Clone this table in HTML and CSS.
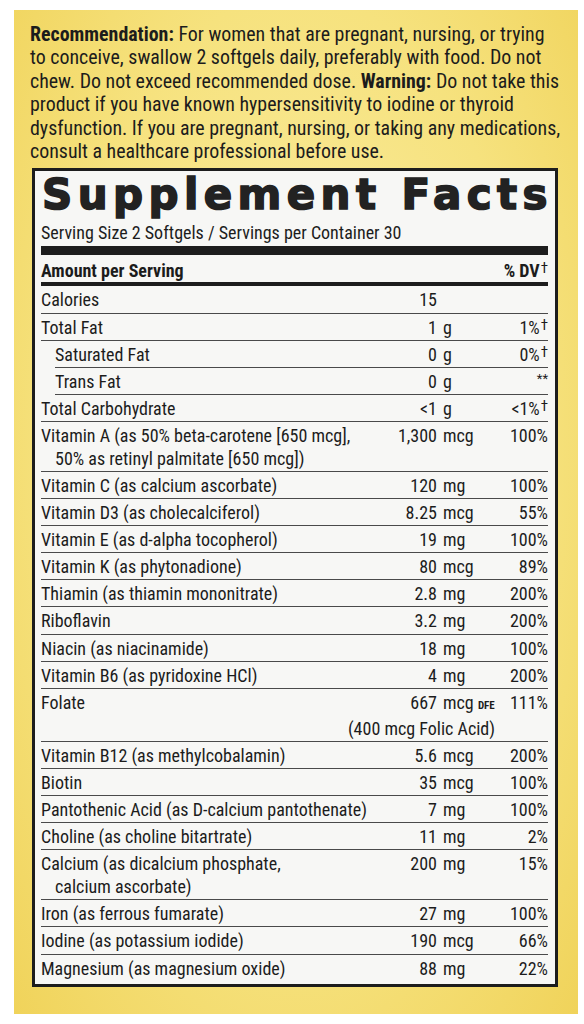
FILE: index.html
```html
<!DOCTYPE html>
<html lang="en">
<head>
    <meta charset="UTF-8">
    <meta name="viewport" content="width=device-width, initial-scale=1.0">
    <title>Supplement Facts</title>
    <link rel="stylesheet" href="styles.css">
</head>
<body>
    <div class="panel">
        <p class="directions"><b>Recommendation:</b> For women that are pregnant, nursing, or trying<br>to conceive, swallow 2 softgels daily, preferably with food. Do not<br>chew. Do not exceed recommended dose. <b>Warning:</b> Do not take this<br>product if you have known hypersensitivity to iodine or thyroid<br>dysfunction. If you are pregnant, nursing, or taking any medications,<br>consult a healthcare professional before use.</p>

        <div class="facts">
            <h1 class="facts-title">Supplement Facts</h1>
            <div class="serving">Serving Size 2 Softgels / Servings per Container 30</div>
            <div class="head-row">
                <span>Amount per Serving</span>
                <span>% DV<sup class="dag">†</sup></span>
            </div>

            <div class="rows">
                <div class="row"><span class="name">Calories</span><span class="num">15</span><span class="unit"></span><span class="dv"></span></div>
                <div class="row"><span class="name">Total Fat</span><span class="num">1</span><span class="unit">g</span><span class="dv">1%<sup class="dag">†</sup></span></div>
                <div class="row sub"><span class="name">Saturated Fat</span><span class="num">0</span><span class="unit">g</span><span class="dv">0%<sup class="dag">†</sup></span></div>
                <div class="row sub"><span class="name">Trans Fat</span><span class="num">0</span><span class="unit">g</span><span class="dv"><sup class="stars">**</sup></span></div>
                <div class="row"><span class="name">Total Carbohydrate</span><span class="num">&lt;1</span><span class="unit">g</span><span class="dv">&lt;1%<sup class="dag">†</sup></span></div>
                <div class="row"><span class="name">Vitamin A (as 50% beta-carotene [650 mcg],<br>50% as retinyl palmitate [650 mcg])</span><span class="num">1,300</span><span class="unit">mcg</span><span class="dv">100%</span></div>
                <div class="row"><span class="name">Vitamin C (as calcium ascorbate)</span><span class="num">120</span><span class="unit">mg</span><span class="dv">100%</span></div>
                <div class="row"><span class="name">Vitamin D3 (as cholecalciferol)</span><span class="num">8.25</span><span class="unit">mcg</span><span class="dv">55%</span></div>
                <div class="row"><span class="name">Vitamin E (as d-alpha tocopherol)</span><span class="num">19</span><span class="unit">mg</span><span class="dv">100%</span></div>
                <div class="row"><span class="name">Vitamin K (as phytonadione)</span><span class="num">80</span><span class="unit">mcg</span><span class="dv">89%</span></div>
                <div class="row"><span class="name">Thiamin (as thiamin mononitrate)</span><span class="num">2.8</span><span class="unit">mg</span><span class="dv">200%</span></div>
                <div class="row"><span class="name">Riboflavin</span><span class="num">3.2</span><span class="unit">mg</span><span class="dv">200%</span></div>
                <div class="row"><span class="name">Niacin (as niacinamide)</span><span class="num">18</span><span class="unit">mg</span><span class="dv">100%</span></div>
                <div class="row"><span class="name">Vitamin B6 (as pyridoxine HCl)</span><span class="num">4</span><span class="unit">mg</span><span class="dv">200%</span></div>
                <div class="row"><span class="name">Folate</span><span class="num">667</span><span class="unit">mcg <small class="dfe">DFE</small></span><span class="dv">111%</span><span class="extra">(400 mcg Folic Acid)</span></div>
                <div class="row"><span class="name">Vitamin B12 (as methylcobalamin)</span><span class="num">5.6</span><span class="unit">mcg</span><span class="dv">200%</span></div>
                <div class="row"><span class="name">Biotin</span><span class="num">35</span><span class="unit">mcg</span><span class="dv">100%</span></div>
                <div class="row"><span class="name">Pantothenic Acid (as D-calcium pantothenate)</span><span class="num">7</span><span class="unit">mg</span><span class="dv">100%</span></div>
                <div class="row"><span class="name">Choline (as choline bitartrate)</span><span class="num">11</span><span class="unit">mg</span><span class="dv">2%</span></div>
                <div class="row"><span class="name">Calcium (as dicalcium phosphate,<br>calcium ascorbate)</span><span class="num">200</span><span class="unit">mg</span><span class="dv">15%</span></div>
                <div class="row"><span class="name">Iron (as ferrous fumarate)</span><span class="num">27</span><span class="unit">mg</span><span class="dv">100%</span></div>
                <div class="row"><span class="name">Iodine (as potassium iodide)</span><span class="num">190</span><span class="unit">mcg</span><span class="dv">66%</span></div>
                <div class="row"><span class="name">Magnesium (as magnesium oxide)</span><span class="num">88</span><span class="unit">mg</span><span class="dv">22%</span></div>
            </div>
        </div>
    </div>
</body>
</html>
```

FILE: styles.css
```css
body {
    margin: 0;
    padding: 10px 6px 7px 14px;
    background: #ffffff;
    font-family: "Roboto Condensed", Roboto, sans-serif;
    font-stretch: 75%;
    color: #1c1c1c;
}

.panel {
    background: radial-gradient(ellipse at 50% 45%, #fbeea6 0%, #f6e27e 60%, #f0d35a 100%);
    padding: 13px 20px 27px 18px;
}

.directions {
    margin: 0 -14px 5px -2px;
    font-size: 19.9px;
    line-height: 23.4px;
    white-space: nowrap;
}

.directions b {
    font-weight: bold;
}

/* caixa de informacao nutricional */
.facts {
    background: #f7f7f5;
    border: 3px solid #1d1d1d;
    padding: 0 7px 3px 6px;
}

.facts-title {
    margin: 0;
    font-family: "DejaVu Sans", sans-serif;
    font-stretch: normal;
    font-weight: bold;
    font-size: 42px;
    line-height: 48px;
    letter-spacing: 5.4px;
    -webkit-text-stroke: 1.6px #222;
    white-space: nowrap;
    color: #222;
    padding-left: 1px;
}

.serving {
    font-size: 18px;
    line-height: 23px;
    padding: 2px 0 2px;
    border-bottom: 9px solid #1d1d1d;
}

.head-row {
    display: flex;
    justify-content: space-between;
    font-size: 18px;
    line-height: 23px;
    font-weight: bold;
    padding-top: 4px;
    border-bottom: 4.5px solid #1d1d1d;
}

.dag {
    font-size: 15px;
    font-weight: normal;
    vertical-align: 4px;
    line-height: 0;
    margin-left: 1px;
}

.stars {
    font-size: 13px;
    vertical-align: 5px;
    line-height: 0;
}

.row {
    display: grid;
    grid-template-columns: 1fr 60px 58px 53px;
    font-size: 18px;
    line-height: 23px;
    padding: 2px 0 1.1px;
    border-bottom: 1.2px solid #4a4a4a;
}

.row:last-child {
    border-bottom: none;
}

.row.sub {
    margin-left: 14px;
}

.name {
    padding-left: 14px;
    text-indent: -14px;
}

.num {
    text-align: right;
}

.unit {
    padding-left: 6px;
    white-space: nowrap;
}

.dv {
    text-align: right;
    white-space: nowrap;
}

.dfe {
    font-size: 11px;
    font-weight: bold;
}

.extra {
    grid-column: 1 / 4;
    text-align: right;
    white-space: nowrap;
}
```
